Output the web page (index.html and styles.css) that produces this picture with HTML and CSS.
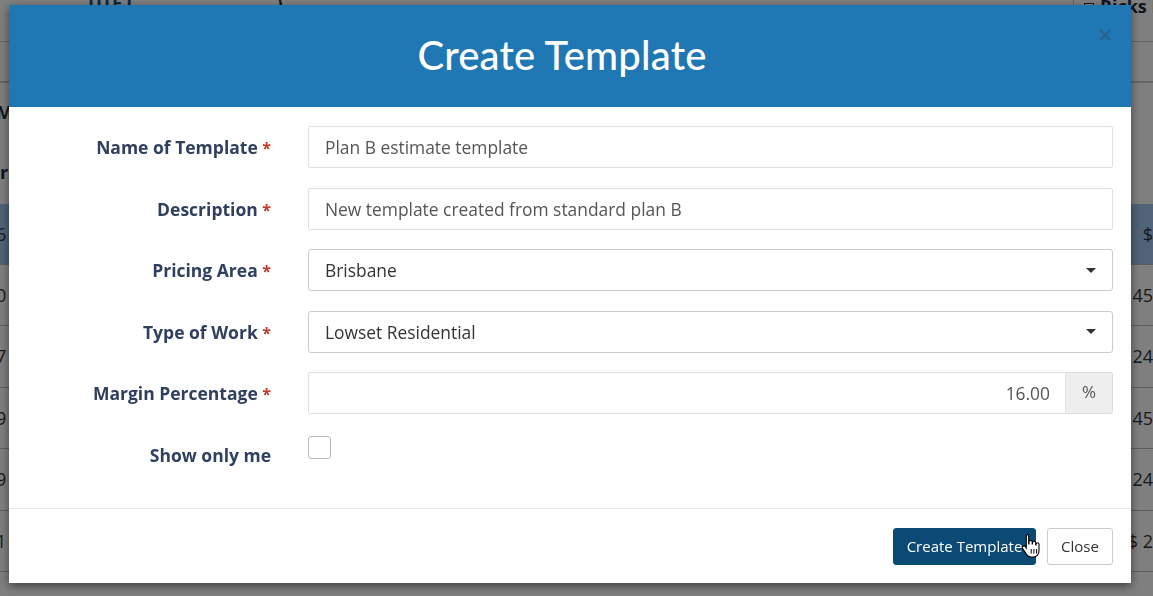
FILE: index.html
```html
<!DOCTYPE html>
<html>
<head>
<meta charset="utf-8">
<link rel="stylesheet" href="styles.css">
</head>
<body>
<div class="page">
  <div class="topbar">
    <span class="tb-left">IIIET</span>
    <span class="tb-mid">)</span>
    <span class="tb-right"><span class="tb-icon"></span>Ricks P</span>
  </div>
  <div class="subbar"></div>
  <div class="section"><span class="sec-title">MA</span></div>
  <div class="section2"><span class="sec-title2">Er</span></div>
  <table class="bg-table">
    <tr class="head"><td>6</td><td class="amt">$</td></tr>
    <tr><td>0</td><td class="amt">$ 45</td></tr>
    <tr><td>7</td><td class="amt">$ 24</td></tr>
    <tr><td>9</td><td class="amt">$ 45</td></tr>
    <tr><td>9</td><td class="amt">$ 24</td></tr>
    <tr><td>1</td><td class="amt">$ 2</td></tr>
  </table>
</div>
<div class="backdrop"></div>
<div class="modal">
  <div class="modal-header">
    <h1 class="modal-title">Create Template</h1>
    <svg class="close-x" width="12" height="12" viewBox="0 0 12 12"><path d="M1 1L11 11M11 1L1 11" stroke="#2f5f88" stroke-width="2"/></svg>
  </div>
  <form class="modal-body">
    <label class="lbl">Name of Template <span class="req">*</span></label>
    <div class="ctl"><input class="inp" type="text" value="Plan B estimate template"></div>

    <label class="lbl">Description <span class="req">*</span></label>
    <div class="ctl"><input class="inp" type="text" value="New template created from standard plan B"></div>

    <label class="lbl">Pricing Area <span class="req">*</span></label>
    <div class="ctl"><div class="sel"><span>Brisbane</span><span class="caret"></span></div></div>

    <label class="lbl">Type of Work <span class="req">*</span></label>
    <div class="ctl"><div class="sel"><span>Lowset Residential</span><span class="caret"></span></div></div>

    <label class="lbl">Margin Percentage <span class="req">*</span></label>
    <div class="ctl"><div class="group"><input class="inp num" type="text" value="16.00"><span class="addon">%</span></div></div>

    <label class="lbl">Show only me</label>
    <div class="ctl"><span class="chk"></span></div>
  </form>
  <div class="modal-footer">
    <button class="btn primary" type="button">Create Template</button>
    <button class="btn plain" type="button">Close</button>
  </div>
</div>
<svg class="cursor" width="20" height="26" viewBox="0 0 20 26">
  <path d="M6 1.5c1 0 1.7.7 1.7 1.7V11h.3V9c0-1 .7-1.6 1.6-1.6s1.6.6 1.6 1.6v2h.3v-1.2c0-1 .7-1.6 1.6-1.6s1.6.6 1.6 1.6V12h.3v-.8c0-1 .7-1.5 1.5-1.5s1.5.6 1.5 1.5v6.5c0 3.5-2.3 6.3-5.6 6.3H10c-2 0-3.3-.9-4.5-2.6L1.7 15.6c-.6-.9-.4-1.9.4-2.4.8-.5 1.7-.3 2.3.5l.9 1.3V3.2c0-1 .7-1.7 1.7-1.7z" fill="#fff" stroke="#000" stroke-width="1.1"/>
  <path d="M10.2 16v4.5M12.9 16v4.5M15.6 16v4.5" stroke="#000" stroke-width="1"/>
</svg>
</body>
</html>
```
FILE: styles.css
```css
* { box-sizing: border-box; }
html, body { margin: 0; padding: 0; }
body {
  width: 1153px;
  height: 596px;
  overflow: hidden;
  font-family: "Open Sans", "Liberation Sans", sans-serif;
  background: #fff;
  position: relative;
}

/* background page */
.page { width: 1153px; color: #1c2b44; }
.topbar {
  height: 42px;
  border-bottom: 1px solid #ccc;
  display: flex;
  align-items: flex-start;
  font-size: 18px;
  font-weight: 700;
  line-height: 1;
}
.tb-left { margin-left: 88px; margin-top: -6px; letter-spacing: 2px; color: #1a4c7a; }
.tb-mid { margin-left: 140px; margin-top: -6px; }
.tb-right { margin-left: auto; margin-top: -3px; display: flex; gap: 6px; padding-left: 10px; border-left: 1px solid #ccc; height: 42px; width: 80px; white-space: nowrap; overflow: hidden; }
.tb-icon { width: 10px; height: 10px; border: 1px solid #333; margin-top: 6px; flex: none; }
.subbar { height: 40px; border-bottom: 1px solid #ccc; }
.section { height: 58px; border-top: 1px solid #ccc; display: flex; align-items: center; }
.sec-title { font-size: 18px; font-weight: 700; margin-left: -4px; }
.section2 { height: 64px; display: flex; align-items: center; }
.sec-title2 { font-size: 18px; font-weight: 700; margin-left: -10px; }
.bg-table { width: 100%; border-collapse: collapse; font-size: 18px; color: #333; }
.bg-table td { height: 61.5px; border-bottom: 1px solid #bbb; padding: 0; }
.bg-table td:first-child { text-indent: -4px; }
.bg-table .amt { text-align: right; white-space: nowrap; padding-right: 0; }
.bg-table .head td { background: #a0c6ee; height: 60px; }

.backdrop {
  position: fixed;
  inset: 0;
  background: rgba(0, 0, 0, 0.5);
}

/* modal */
.modal {
  position: fixed;
  left: 9px;
  top: 5px;
  width: 1122px;
  height: 578px;
  background: #fff;
  box-shadow: 0 3px 9px rgba(0, 0, 0, 0.5);
  display: flex;
  flex-direction: column;
}
.modal-header {
  height: 102px;
  flex: none;
  background: #1f77b4;
  display: flex;
  align-items: center;
  justify-content: center;
  position: relative;
}
.modal-title {
  margin: 0 16px 0 0;
  font-family: Lato, "Open Sans", sans-serif;
  font-weight: 500;
  font-size: 40px;
  color: #fff;
  letter-spacing: 0.2px;
  padding-bottom: 2px;
}
.close-x {
  position: absolute;
  right: 20px;
  top: 24px;
}

.modal-body {
  flex: 1;
  margin: 0;
  padding: 19px 18px 32px 12px;
  display: grid;
  grid-template-columns: 250px 1fr;
  column-gap: 37px;
  row-gap: 19.5px;
  grid-auto-rows: 42px;
  border-bottom: 1px solid #e5e5e5;
  align-content: start;
}
.lbl {
  text-align: right;
  font-size: 17.5px;
  font-weight: 700;
  color: #2f3f5f;
  align-self: center;
  white-space: nowrap;
}
.req { color: #c0392b; font-size: 16px; }
.ctl { display: flex; align-items: stretch; }
.inp {
  width: 100%;
  height: 42px;
  border: 1px solid #e0e0e0;
  border-radius: 2px;
  padding: 0 16px;
  font-family: "Open Sans", sans-serif;
  font-size: 17.4px;
  color: #555;
  background: #fff;
  outline: none;
}
.sel {
  width: 100%;
  height: 42px;
  border: 1px solid #ccc;
  border-radius: 3px;
  padding: 0 16px;
  display: flex;
  align-items: center;
  justify-content: space-between;
  font-size: 17.4px;
  color: #333;
}
.caret {
  width: 0;
  height: 0;
  border-left: 5px solid transparent;
  border-right: 5px solid transparent;
  border-top: 5px solid #333;
}
.group { display: flex; width: 100%; }
.num { text-align: right; border-radius: 2px 0 0 2px; padding-right: 15px; }
.addon {
  width: 47px;
  flex: none;
  background: #eee;
  border: 1px solid #ddd;
  border-left: none;
  border-radius: 0 3px 3px 0;
  display: flex;
  align-items: center;
  justify-content: center;
  font-size: 17px;
  color: #555;
  padding-bottom: 4px;
}
.chk {
  width: 23px;
  height: 23px;
  border: 1px solid #b8b8b8;
  border-radius: 3px;
  margin-top: 2px;
  background: #fff;
}

.modal-footer {
  height: 75px;
  flex: none;
  display: flex;
  justify-content: flex-end;
  align-items: flex-start;
  gap: 11px;
  padding: 19px 18px 0 0;
}
.btn {
  height: 37px;
  font-family: "Open Sans", sans-serif;
  font-size: 15px;
  border-radius: 3px;
  padding: 0;
  white-space: nowrap;
  cursor: pointer;
}
.btn.primary {
  width: 143px;
  background: #0b4a74;
  color: #fff;
  border: 1px solid #0b4a74;
}
.btn.plain {
  width: 66px;
  background: #fff;
  color: #333;
  border: 1px solid #ccc;
}
.cursor {
  position: absolute;
  left: 1021px;
  top: 533px;
}
```
